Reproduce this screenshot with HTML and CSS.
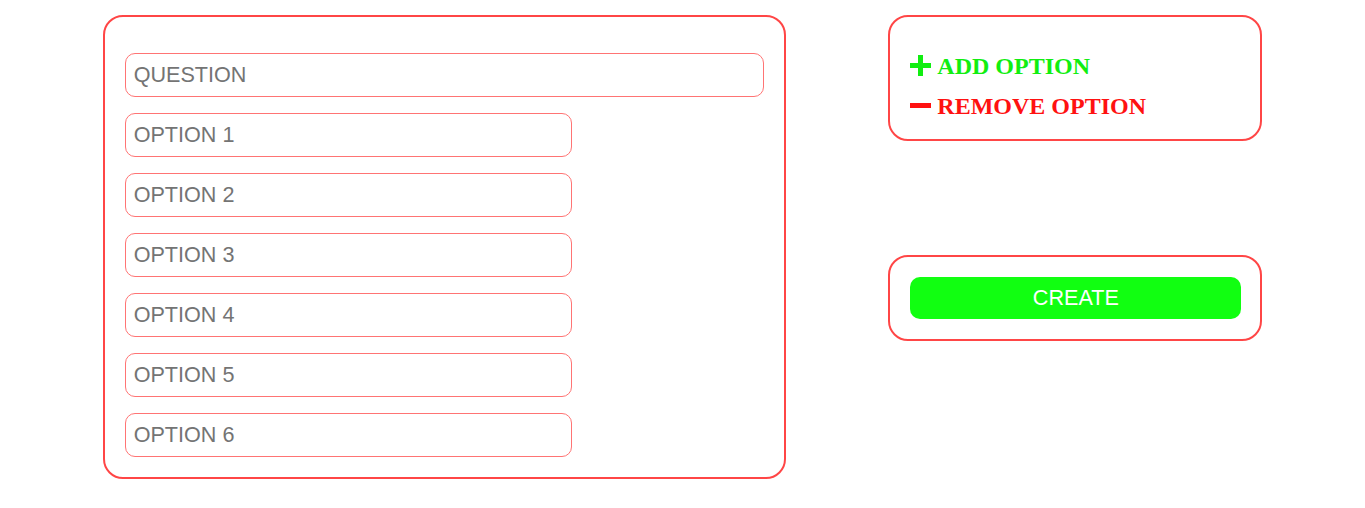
FILE: index.html
```html
<!DOCTYPE html>
<html>
<head>
<meta charset="utf-8">
<link rel="stylesheet" href="styles.css">
</head>
<body>
<div class="page">
  <div class="card form-card">
    <input class="field field-question" type="text" placeholder="QUESTION">
    <input class="field field-option" type="text" placeholder="OPTION 1">
    <input class="field field-option" type="text" placeholder="OPTION 2">
    <input class="field field-option" type="text" placeholder="OPTION 3">
    <input class="field field-option" type="text" placeholder="OPTION 4">
    <input class="field field-option" type="text" placeholder="OPTION 5">
    <input class="field field-option" type="text" placeholder="OPTION 6">
  </div>
  <div class="side">
    <div class="card actions-card">
      <div class="action action-add">
        <svg class="icon" width="21" height="21" viewBox="0 0 21 21"><rect x="8" y="0" width="5" height="21" fill="#11ee11"/><rect x="0" y="8" width="21" height="5" fill="#11ee11"/></svg>
        <span>ADD OPTION</span>
      </div>
      <div class="action action-remove">
        <svg class="icon" width="21" height="21" viewBox="0 0 21 21"><rect x="0" y="8" width="21" height="5" fill="#ff1111"/></svg>
        <span>REMOVE OPTION</span>
      </div>
    </div>
    <div class="card create-card">
      <button class="create-btn">CREATE</button>
    </div>
  </div>
</div>
</body>
</html>
```
FILE: styles.css
```css
html, body {
  margin: 0;
  padding: 0;
  background: #fff;
}
.page {
  display: flex;
  justify-content: space-evenly;
  align-items: flex-start;
  padding-top: 15px;
}
.card {
  border: 2px solid #ff4646;
  border-radius: 20px;
  box-sizing: border-box;
  background: #fff;
}
.form-card {
  width: 683px;
  height: 464px;
  padding: 36px 19px 19px 20px;
  display: flex;
  flex-direction: column;
  align-items: flex-start;
  gap: 16px;
}
.field {
  box-sizing: border-box;
  height: 44px;
  border: 1px solid #ff7474;
  border-radius: 10px;
  padding: 0 8px;
  margin: 0;
  font-family: "Liberation Sans", Arial, sans-serif;
  font-size: 21.6px;
  color: #444;
  outline: none;
  background: #fff;
}
.field::placeholder {
  color: #747474;
}
.field-question {
  width: 639px;
}
.field-option {
  width: 447px;
}
.side {
  width: 374px;
  display: flex;
  flex-direction: column;
  gap: 114px;
}
.actions-card {
  height: 126px;
  padding: 29px 20px 0 20px;
  display: flex;
  flex-direction: column;
  gap: 0;
}
.action {
  display: flex;
  align-items: center;
  gap: 6px;
  height: 40px;
  font-family: "Liberation Serif", "Times New Roman", serif;
  font-weight: bold;
  font-size: 24px;
  line-height: 40px;
}
.action .icon {
  flex: none;
  position: relative;
  top: -1px;
}
.action-add {
  color: #11ee11;
}
.action-remove {
  color: #ff1111;
}
.create-card {
  height: 86px;
  padding: 20px 19px 19px 20px;
}
.create-btn {
  display: block;
  width: 100%;
  height: 42px;
  border: none;
  border-radius: 10px;
  background: #11ff11;
  color: #fff;
  font-family: "Liberation Sans", Arial, sans-serif;
  font-size: 21.6px;
  padding: 0 0 1px 0;
  margin: 0;
  cursor: pointer;
}
```
